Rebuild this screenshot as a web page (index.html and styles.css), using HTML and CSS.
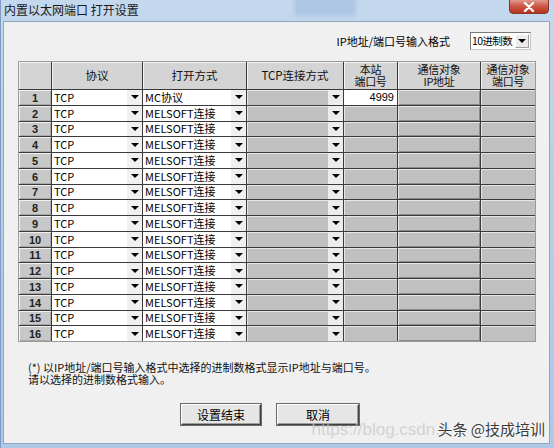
FILE: index.html
```html
<!DOCTYPE html>
<html>
<head>
<meta charset="utf-8">
<link rel="stylesheet" href="styles.css">
</head>
<body>
<div class="window">
  <div class="titlebar">
    <span class="title">内置以太网端口 打开设置</span>
    <span class="ghost-btn"></span>
    <span class="close"><svg width="12" height="10" viewBox="0 0 12 10"><path d="M2 1 L10 9 M10 1 L2 9" stroke="#fff" stroke-width="2.4" stroke-linecap="round"/></svg></span>
  </div>
  <div class="client">
    <div class="format-row">
      <span class="format-label">IP地址/端口号输入格式</span>
      <div class="combo">
        <span class="combo-text">10进制数</span>
        <span class="combo-btn"><i class="tri"></i></span>
      </div>
    </div>

    <div class="grid" id="grid">
      <div class="hd"></div>
      <div class="hd">协议</div>
      <div class="hd">打开方式</div>
      <div class="hd">TCP连接方式</div>
      <div class="hd two"><span>本站</span><span>端口号</span></div>
      <div class="hd two"><span>通信对象</span><span>IP地址</span></div>
      <div class="hd two"><span>通信对象</span><span>端口号</span></div>
    </div>

    <div class="note">
      <div>(*) 以IP地址/端口号输入格式中选择的进制数格式显示IP地址与端口号。</div>
      <div>请以选择的进制数格式输入。</div>
    </div>

    <div class="buttons">
      <button class="btn btn-ok">设置结束</button>
      <button class="btn btn-cancel">取消</button>
    </div>

    <div class="watermark">
      <span class="wm-url">https://blog.csdn.n</span>
      <span class="wm-brand">头条 @技成培训</span>
    </div>
  </div>
</div>
<script>
  var grid = document.getElementById('grid');
  var html = '';
  for (var i = 1; i <= 16; i++) {
    html += '<div class="num">' + i + '</div>';
    html += '<div class="dd white"><span>TCP</span><span class="ddb"><i class="tri"></i></span></div>';
    html += '<div class="dd white"><span>' + (i === 1 ? 'MC协议' : 'MELSOFT连接') + '</span><span class="ddb"><i class="tri"></i></span></div>';
    html += '<div class="dd gray"><span></span><span class="ddb"><i class="tri"></i></span></div>';
    if (i === 1) html += '<div class="port white">4999</div>';
    else html += '<div class="cell gray"></div>';
    html += '<div class="cell gray ip"></div>';
    html += '<div class="cell gray"></div>';
  }
  grid.insertAdjacentHTML('beforeend', html);
</script>
</body>
</html>
```

FILE: styles.css
```css
html, body {
  margin: 0;
  padding: 0;
}
body {
  width: 554px;
  height: 448px;
  overflow: hidden;
  font-family: "Noto Sans CJK SC", "Liberation Sans", sans-serif;
  font-size: 11px;
  color: #000;
}
.window {
  width: 554px;
  height: 448px;
  background: linear-gradient(180deg, #c4d8ee 0%, #b8cfe9 40%, #aec8e6 100%);
  display: flex;
  flex-direction: column;
  box-sizing: border-box;
  border-left: 1px solid #7e9cc0;
}
.titlebar {
  height: 21px;
  position: relative;
  flex: none;
}
.title {
  position: absolute;
  left: 3px;
  top: 2px;
  font-size: 12px;
  line-height: 15px;
  color: #1a1a1a;
}
.ghost-btn {
  position: absolute;
  left: 294px;
  top: -2px;
  width: 58px;
  height: 15px;
  background: #a9c3e2;
  border: 1px solid #8eaed6;
  filter: blur(2px);
  opacity: 0.8;
}
.close {
  position: absolute;
  left: 508px;
  top: -1px;
  width: 40px;
  height: 15px;
  border-radius: 0 0 4px 4px;
  background: linear-gradient(180deg, #e09a8c 0%, #cc5a47 45%, #b8331f 100%);
  border: 1px solid #7f3a33;
  box-sizing: border-box;
  display: flex;
  align-items: center;
  justify-content: center;
}
.client {
  flex: 1;
  margin: 0 4px 4px 2px;
  background: #f0f0f0;
  border: 1px solid #8fa6c2;
  position: relative;
  display: flex;
  flex-direction: column;
}
.format-row {
  display: flex;
  justify-content: flex-end;
  align-items: center;
  gap: 20px;
  margin-top: 10px;
  padding-right: 18px;
  height: 18px;
}
.format-label {
  font-size: 11px;
  line-height: 14px;
  white-space: nowrap;
}
.combo {
  width: 61px;
  height: 18px;
  box-sizing: border-box;
  border: 1px solid #7a7a7a;
  border-right-color: #c8c8c8;
  border-bottom-color: #c8c8c8;
  background: #fff;
  display: flex;
  align-items: center;
}
.combo-text {
  flex: 1;
  font-size: 10.5px;
  line-height: 14px;
  padding-left: 1px;
  white-space: nowrap;
  letter-spacing: -0.6px;
}
.combo-btn {
  flex: none;
  width: 14px;
  height: 14px;
  margin-right: 1px;
  background: #ececec;
  border: 1px solid #a0a0a0;
  border-top-color: #fff;
  border-left-color: #fff;
  box-sizing: border-box;
  display: flex;
  align-items: center;
  justify-content: center;
}
.tri {
  display: block;
  width: 0;
  height: 0;
  border-left: 4px solid transparent;
  border-right: 4px solid transparent;
  border-top: 4px solid #000;
}

.grid {
  margin: 11px 0 0 14px;
  width: 518px;
  box-sizing: border-box;
  display: grid;
  grid-template-columns: 32px 90px 103px 96px 53px 82px 54px;
  grid-template-rows: 27px repeat(16, 14.75px);
  column-gap: 1px;
  row-gap: 1px;
  background: #3a3a3a;
  border: 1px solid #9a9a9a;
}
.hd {
  background: #d4d4d4;
  box-shadow: inset 1px 1px 0 #f4f4f4;
  display: flex;
  align-items: center;
  justify-content: center;
  text-align: center;
  font-size: 11.5px;
  line-height: 13px;
  color: #111;
  white-space: nowrap;
}
.hd.two {
  flex-direction: column;
  font-size: 11px;
  letter-spacing: -0.3px;
}
.hd.two span {
  display: block;
  height: 11.5px;
  line-height: 11.5px;
}
.num {
  background: #c8c8c8;
  box-shadow: inset 1px 1px 0 #f0f0f0, inset -1px -1px 0 #a8a8a8;
  display: flex;
  align-items: center;
  justify-content: center;
  font-family: "Liberation Sans", sans-serif;
  font-size: 11px;
  font-weight: bold;
  color: #222;
  padding-top: 1px;
}
.dd {
  display: flex;
  align-items: center;
  overflow: hidden;
}
.dd > span:first-child {
  flex: 1;
  padding-left: 2px;
  font-size: 11px;
  line-height: 13px;
  white-space: nowrap;
  color: #000;
}
.white {
  background: #fff;
}
.gray {
  background: #c0c0c0;
  box-shadow: inset 1px 1px 0 #e6e6e6;
}
.ddb {
  width: 15px;
  align-self: stretch;
  background: #f0f0f0;
  display: flex;
  align-items: center;
  justify-content: center;
}
.dd.gray .ddb {
  background: #ececec;
}
.port {
  font-family: "Liberation Sans", sans-serif;
  font-size: 11px;
  text-align: right;
  padding-right: 3px;
  line-height: 15px;
}
.cell.ip {
  box-shadow: inset 1px 1px 0 #e6e6e6, inset -1px -1px 0 #8a8a8a;
}

.note {
  margin: 19px 0 0 24px;
  font-size: 11px;
  line-height: 12px;
  color: #111;
}
.buttons {
  display: flex;
  gap: 16px;
  margin: 19px 0 0 177px;
}
.btn {
  width: 80px;
  height: 21px;
  font-family: "Noto Sans CJK SC", sans-serif;
  font-size: 12px;
  line-height: 14px;
  padding: 0;
  background: #e6e6e6;
  border: 1px solid #fff;
  border-right-color: #404040;
  border-bottom-color: #404040;
  box-shadow: inset -1px -1px 0 #a0a0a0, 0 0 0 1px #6a6a6a;
  color: #000;
}
.btn-cancel {
  width: 82px;
}
.watermark {
  position: absolute;
  right: 4px;
  bottom: 3px;
  display: flex;
  align-items: baseline;
  white-space: nowrap;
}
.wm-url {
  font-family: "Liberation Sans", sans-serif;
  font-size: 17px;
  color: rgba(200, 200, 200, 0.75);
  margin-right: -12px;
}
.wm-brand {
  font-size: 15px;
  color: #3a3a3a;
  text-shadow: 0 0 2px #fff, 0 0 2px #fff;
}
```
